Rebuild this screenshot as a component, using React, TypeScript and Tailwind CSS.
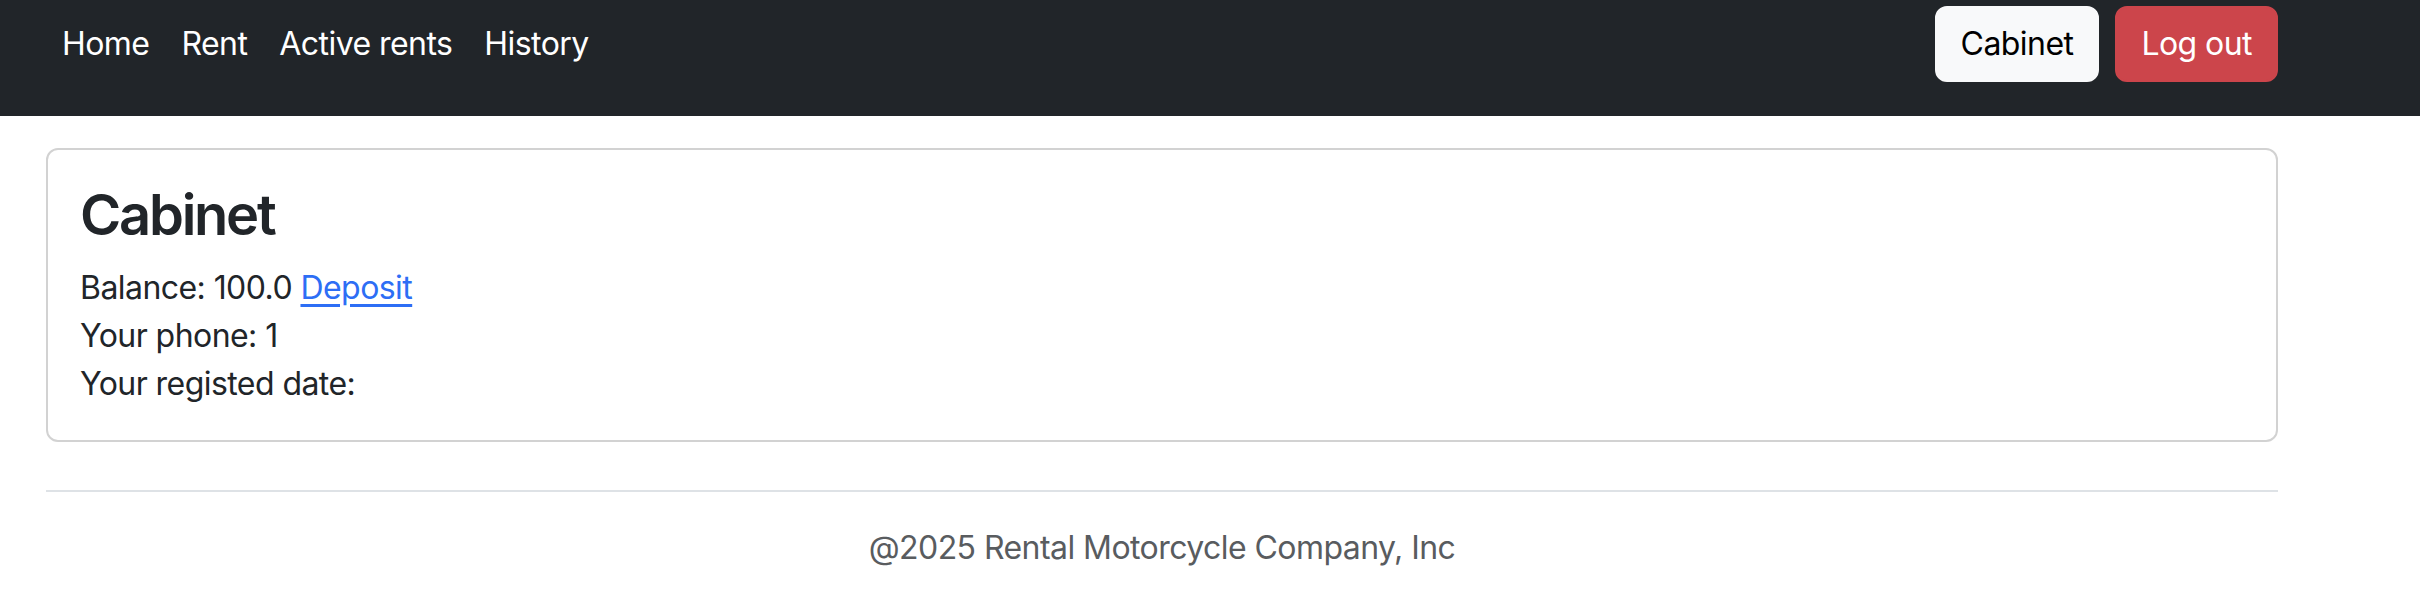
const links = ["Home", "Rent", "Active rents", "History"];

export default function App() {
	return (
		<div className="min-h-screen bg-white font-['Inter','Noto_Sans',sans-serif] text-[#212529] tracking-[-0.035em]">
			<nav className="h-[116px] bg-[#212529]">
				<div className="ml-[46px] w-[2232px] flex items-start justify-between pt-[6px]">
					<ul className="flex items-center h-[76px]">
						{ links.map((link) => (
							<li key={link}>
								<a href="#" className="block px-4 text-[32px] leading-[48px] text-white">{ link }</a>
							</li>
						))}
					</ul>
					<div className="flex gap-4">
						<button className="h-[76px] px-6 rounded-[12px] border-2 border-[#f8f9fa] bg-[#f8f9fa] text-black text-[32px] leading-[48px]">Cabinet</button>
						<button className="h-[76px] px-6 rounded-[12px] border-2 border-[#cc454b] bg-[#cc454b] text-white text-[32px] leading-[48px]">Log out</button>
					</div>
				</div>
			</nav>
			<main className="ml-[46px] w-[2232px] pt-8">
				<div className="rounded-[12px] border-2 border-[#d2d2d2] p-8">
					<h3 className="text-[56px] leading-[66px] font-semibold tracking-[-0.04em] mb-4">Cabinet</h3>
					<div className="text-[32px] leading-[48px]">
						<p>Balance: 100.0 <a href="#" className="text-[#2d6ef5] underline underline-offset-[5px]">Deposit</a></p>
						<p>Your phone: 1</p>
						<p>Your registed date: </p>
					</div>
				</div>
				<footer className="mt-12 border-t-2 border-[#dee2e6] pt-8">
					<p className="text-center text-[32px] leading-[48px] text-[#595c5f]">@2025 Rental Motorcycle Company, Inc</p>
				</footer>
			</main>
		</div>
	);
}
